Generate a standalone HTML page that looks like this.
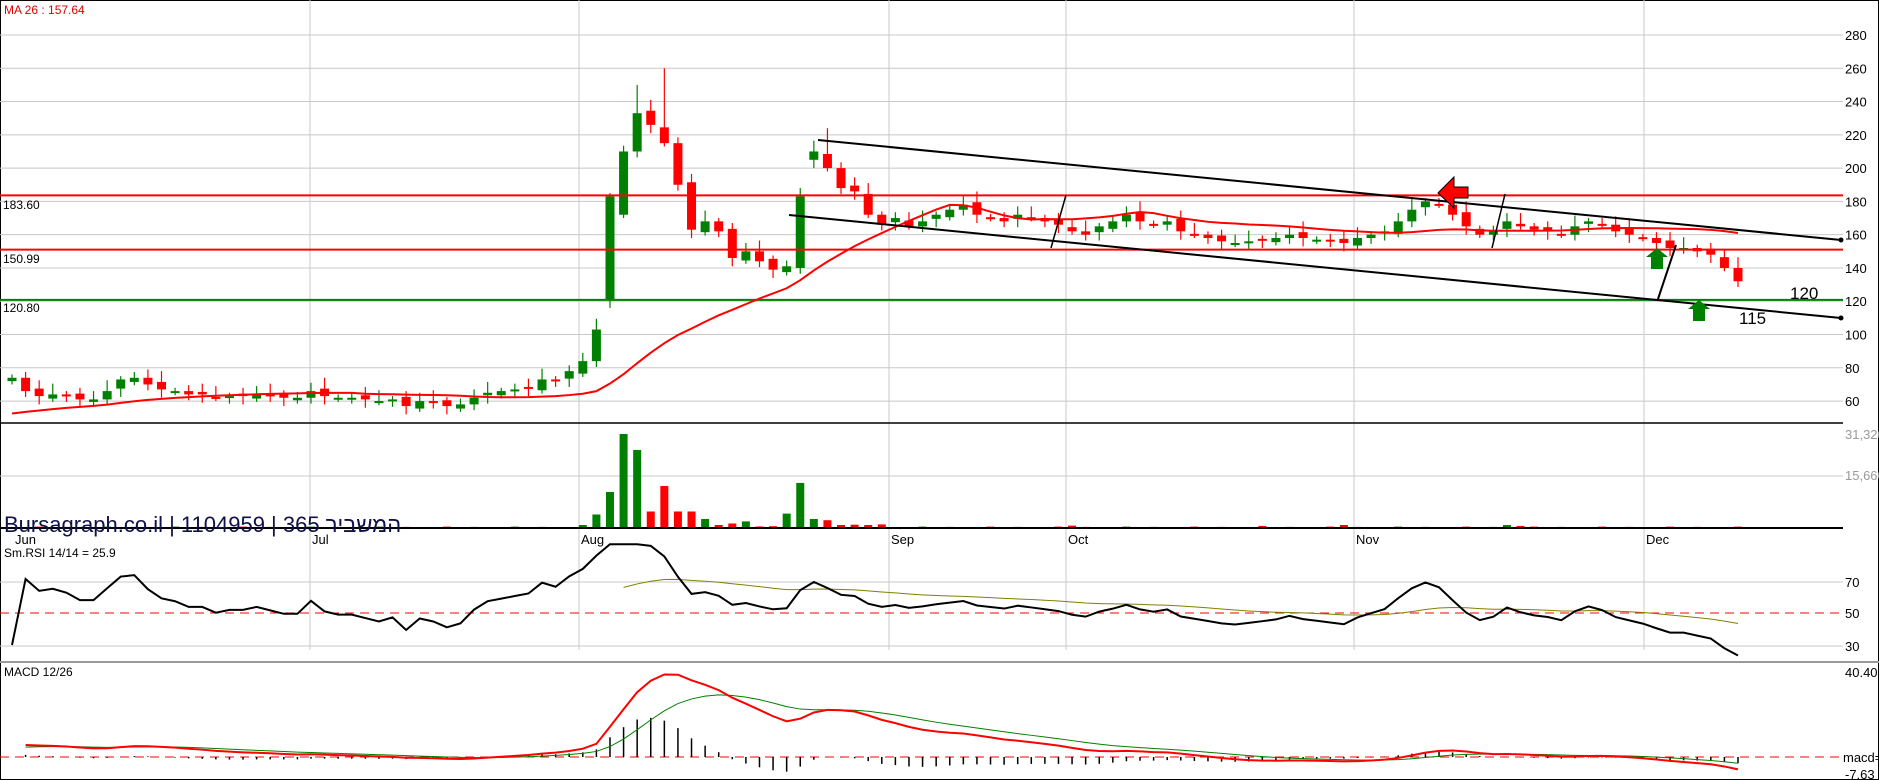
<!DOCTYPE html>
<html><head><meta charset="utf-8"><style>
html,body{margin:0;padding:0;background:#fff;width:1879px;height:780px;overflow:hidden}
svg{display:block}
text{font-family:"Liberation Sans","Noto Sans CJK SC",sans-serif}
</style></head><body>
<svg id="s" width="1879" height="780" xmlns="http://www.w3.org/2000/svg">
<rect x="0.5" y="0.5" width="1878" height="779" fill="#fff" stroke="#000"/>
<g id="grid" stroke="#c8c8c8" stroke-width="1"></g>
<g id="main"></g>
<text x="4" y="14" font-size="12" fill="#e00000">MA 26 : 157.64</text>
<text x="3" y="209" font-size="12" fill="#000">183.60</text>
<text x="3" y="263" font-size="12" fill="#000">150.99</text>
<text x="3" y="312" font-size="12" fill="#000">120.80</text>
<text x="4" y="532" font-size="22" fill="#10104a" transform="scale(1,1)">Bursagraph.co.il | 1104959 | 365 המשביר</text>
<text x="4" y="557" font-size="12" fill="#000">Sm.RSI 14/14 = 25.9</text>
<text x="4" y="676" font-size="12" fill="#000">MACD 12/26</text>
<text x="1790" y="299" font-size="17" fill="#000">120</text>
<text x="1739" y="324" font-size="17" fill="#000">115</text>
<polygon points="1438,193 1454,177 1454,187 1468,187 1468,198 1454,198 1454,208" fill="#ff0000" stroke="#000" stroke-width="1"/>
</svg>
<script>
var S=document.getElementById('main'),G=document.getElementById('grid');
var NS="http://www.w3.org/2000/svg";
function el(p,t,a){var e=document.createElementNS(NS,t);for(var k in a)e.setAttribute(k,a[k]);p.appendChild(e);return e;}
function txt(x,y,s,c,sz){var e=el(S,'text',{x:x,y:y,'font-size':sz||13,fill:c||'#000'});e.textContent=s;}
var R=1843;
function py(p){return 35+(280-p)*1.664;}
for(var p=60;p<=280;p+=20){var y=py(p);el(G,'line',{x1:0,y1:y,x2:R,y2:y});txt(1845,y+5,String(p),'#000',13);}
[310,579,889,1066,1354,1644].forEach(function(x){el(G,'line',{x1:x,y1:0,x2:x,y2:650});});
el(G,'line',{x1:0,y1:476,x2:R,y2:476});txt(1845,480,'15,660','#999',13);txt(1845,439,'31,320','#999',13);
el(G,'line',{x1:0,y1:582,x2:R,y2:582});el(G,'line',{x1:0,y1:646,x2:R,y2:646});
txt(1845,587,'70');txt(1845,618,'50');txt(1845,651,'30');
txt(1845,677,'40.40');txt(1843,762,'macd=');txt(1845,779,'-7.63');
[['Jun',13],['Jul',310],['Aug',579],['Sep',889],['Oct',1066],['Nov',1354],['Dec',1644]].forEach(function(m){txt(m[1]+2,544,m[0],'#000',13);});
var c=[74,66,63,64,63,61,61,66,73,74,70,67,66,64,64,62,63,63,64,63,62,62,
66,63,62,62,61,60,61,57,60,59,57,58,62,65,66,67,68,73,72,78,84,
103,183,210,233,226,215,190,163,168,162,146,150,144,139,141,183,210,200,188,186,172,166,170,
165,168,172,175,178,172,170,168,172,170,168,166,162,160,165,168,172,
168,166,168,162,160,158,156,155,156,157,158,160,158,157,156,155,158,160,
162,168,175,180,178,172,165,160,162,168,165,163,162,160,165,168,166,162,160,
158,155,152,152,150,148,140,132];
var N=c.length,x0=12,x1=1738,dx=(x1-x0)/(N-1);
function X(i){return x0+i*dx;}
var pre=[];for(var i=0;i<26;i++)pre.push(40+i*0.9);
var all=pre.concat(c);
var vol=[];for(var i=0;i<N;i++)vol.push(((i*37)%5)*90+100);
var big={42:1000,43:4500,44:12000,45:31320,46:26000,47:5500,48:14000,49:5500,50:5500,51:3000,52:1000,53:1500,54:2200,55:500,56:600,57:4800,58:15000,59:3000,60:2600,61:1000,62:1100,63:1000,64:1200,78:800,92:700,98:1000,110:1000,111:700};
for(var k in big)vol[k]=big[k];
for(var i=0;i<N;i++){
 var o=i==0?72:c[i-1]+((i%3)-1)*1.5;
 if(i==44)o=121;if(i==58)o=140;if(i==59)o=205;if(i==45)o=172;
 var cl=c[i],up=cl>=o,col=up?'#008000':'#ff0000';
 var hi=Math.max(o,cl)+2+(i%4)*1.5,lo=Math.min(o,cl)-2-(i%3)*1.5;
 if(i==46)hi=250;if(i==48)hi=260;if(i==60)hi=224;
 var x=X(i);
 el(S,'line',{x1:x,y1:py(hi),x2:x,y2:py(lo),stroke:col,'stroke-width':1.2});
 var y1=py(Math.max(o,cl)),h=Math.max(2,py(Math.min(o,cl))-y1);
 el(S,'rect',{x:x-4.5,y:y1,width:9,height:h,fill:col});
 var vh=vol[i]/31320*94;
 el(S,'rect',{x:x-4,y:528-vh,width:8,height:vh,fill:col});
}
el(S,'line',{x1:0,y1:py(183.6),x2:R,y2:py(183.6),stroke:'#ff0000','stroke-width':2});
el(S,'line',{x1:0,y1:py(150.99),x2:R,y2:py(150.99),stroke:'#ff0000','stroke-width':2});
el(S,'line',{x1:0,y1:py(120.8),x2:R,y2:py(120.8),stroke:'#008000','stroke-width':2});
var pts=[];for(var i=0;i<N;i++){var s=0;for(var j=0;j<26;j++)s+=all[i+26-j];pts.push(X(i)+','+py(s/26));}
el(S,'polyline',{points:pts.join(' '),fill:'none',stroke:'#ff0000','stroke-width':2});
function ln(a,b,c2,d,w){el(S,'line',{x1:a,y1:b,x2:c2,y2:d,stroke:'#000','stroke-width':w||2});}
ln(818,140,1841,240);ln(789,215,1841,318);
el(S,'circle',{cx:1841,cy:240,r:2.5,fill:'#000'});el(S,'circle',{cx:1841,cy:318,r:2.5,fill:'#000'});
ln(1066,195,1051,248,1.5);ln(1505,194,1492,248,1.5);ln(1676,245,1658,299,2);
function ga(x,y){el(S,'polygon',{points:(x)+','+y+' '+(x+11)+','+(y+9)+' '+(x+6)+','+(y+9)+' '+(x+6)+','+(y+21)+' '+(x-6)+','+(y+21)+' '+(x-6)+','+(y+9)+' '+(x-11)+','+(y+9),fill:'#008000'});}
ga(1657,248);ga(1699,300);
el(S,'line',{x1:0,y1:423,x2:R,y2:423,stroke:'#000','stroke-width':1.5});
el(S,'line',{x1:0,y1:528,x2:R,y2:528,stroke:'#000','stroke-width':2});
el(S,'line',{x1:0,y1:662,x2:1879,y2:662,stroke:'#999','stroke-width':2});
function ry(v){return 613-(v-50)*1.6;}
el(S,'line',{x1:0,y1:613,x2:R,y2:613,stroke:'#ff0000','stroke-width':1,'stroke-dasharray':'9,6'});
var ag=0,al=0,rsi=[];
for(var i=1;i<all.length;i++){var d=all[i]-all[i-1],g=d>0?d:0,l=d<0?-d:0;ag=(ag*13+g)/14;al=(al*13+l)/14;rsi.push(al==0?100:100-100/(1+ag/al));}
rsi=rsi.slice(25);
var sm=[],e=rsi[0];for(var i=0;i<N;i++){e=e+(rsi[i]-e)*0.07;sm.push(e);}
var rp=[],sp=[];for(var i=0;i<N;i++){var v=Math.max(20,Math.min(93,rsi[i]));rp.push(X(i)+','+ry(v));sp.push(X(i)+','+ry(sm[i]));}
rp[0]=X(0)+','+645;
el(S,'polyline',{points:sp.slice(45).join(' '),fill:'none',stroke:'#808000','stroke-width':1});
el(S,'polyline',{points:rp.join(' '),fill:'none',stroke:'#000','stroke-width':2});
function my(v){return 757-v*2.1;}
el(S,'line',{x1:0,y1:757,x2:R,y2:757,stroke:'#ff0000','stroke-width':1,'stroke-dasharray':'9,6'});
var e12=all[0],e26=all[0],sg=0,mp=[],gp=[];
for(var i=0;i<all.length;i++){e12+= (all[i]-e12)*2/13;e26+=(all[i]-e26)*2/27;var m=e12-e26;sg+=(m-sg)*2/10;
 var j=i-26;if(j>=1){var x=X(j);mp.push(x+','+my(m));gp.push(x+','+my(sg));
 var h=(m-sg)*2.1;el(S,'line',{x1:x,y1:757,x2:x,y2:757-h,stroke:'#000','stroke-width':1.5});}}
el(S,'polyline',{points:gp.join(' '),fill:'none',stroke:'#008000','stroke-width':1});
el(S,'polyline',{points:mp.join(' '),fill:'none',stroke:'#ff0000','stroke-width':2});
</script>
</body></html>
